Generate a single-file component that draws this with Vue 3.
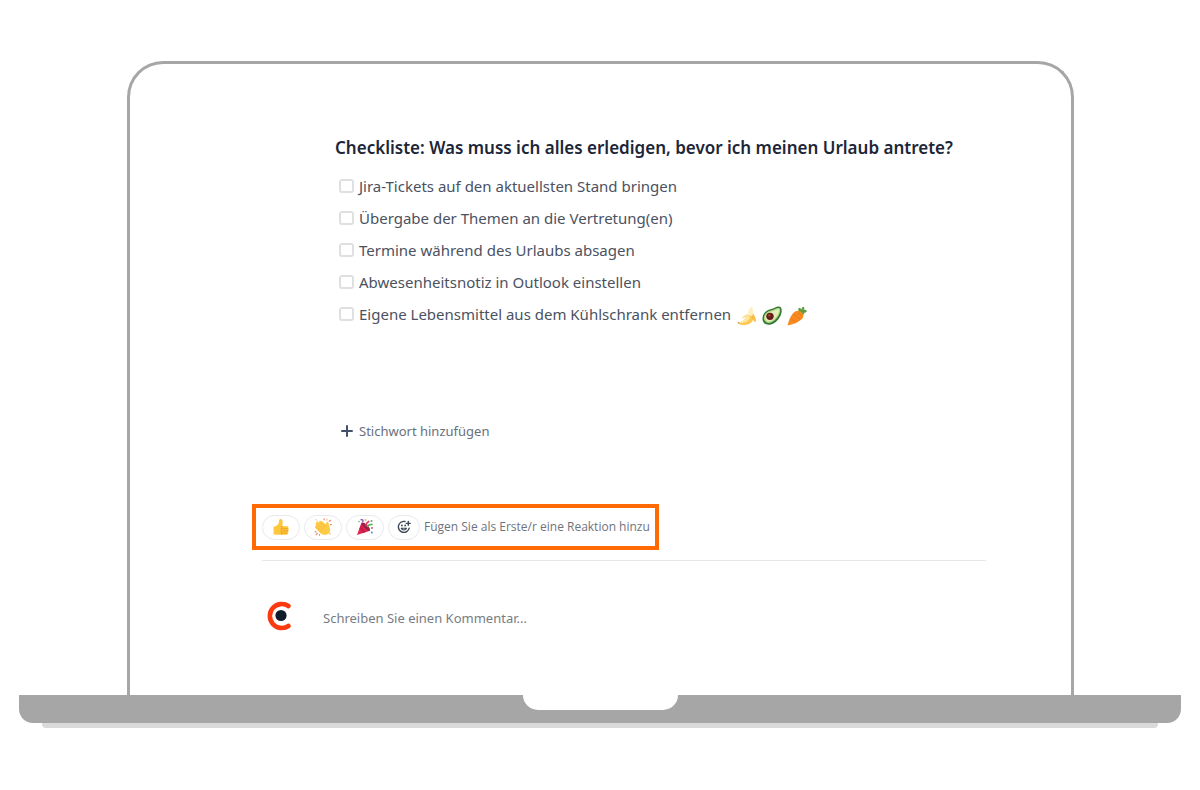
<script setup>
import { ref } from 'vue'

const tasks = ref([
  { id: 'jira', label: 'Jira-Tickets auf den aktuellsten Stand bringen', done: false },
  { id: 'handover', label: 'Übergabe der Themen an die Vertretung(en)', done: false },
  { id: 'meetings', label: 'Termine während des Urlaubs absagen', done: false },
  { id: 'outlook', label: 'Abwesenheitsnotiz in Outlook einstellen', done: false },
  { id: 'food', label: 'Eigene Lebensmittel aus dem Kühlschrank entfernen', done: false, food: true }
])
const comment = ref('')
</script>

<template>
  <div class="laptop">
    <main class="screen">
      <section class="page">
        <div class="article">
          <h1>Checkliste: Was muss ich alles erledigen, bevor ich meinen Urlaub antrete?</h1>
          <ul class="tasks">
            <li v-for="task in tasks" :key="task.id">
              <input :id="task.id" v-model="task.done" type="checkbox" />
              <label :for="task.id">{{ task.label }}</label>
              <span v-if="task.food" class="food">
                <svg viewBox="0 0 20 20" role="img" aria-label="Banane">
                  <path d="M1 16.500C6 16 9 13 10.500 8l6-.500c1.500 5-1.500 11-8 11.500C4.500 19.300 1.500 18.500 1 16.500z" fill="#fdc954" />
                  <path d="M10.500 8.500C9 13 6 15.500 2 16.800c4 .8 9-.8 11-5.300z" fill="#ffe7a0" />
                  <path d="M11 9.500c-.2-3 .3-6 2.300-8 1.300-1 2.400-.1 2.500 1.200.3 3 .7 5 .2 7z" fill="#fff0c4" />
                  <path d="M10 8.500c-2.500.5-4 1.800-5.500 3.800 3-.7 5.500-.6 7.500-1.800z" fill="#fee09a" />
                  <path d="M16 8c2.500 2.500 3.500 5.500 2.500 8.500-1.800-1.800-3.500-3-4-5.500z" fill="#f8bd45" />
                  <path d="M1 15.800l1.500.6-.4 1.500-1.300-.7z" fill="#c9a060" />
                </svg>
                <svg viewBox="0 0 20 20" role="img" aria-label="Avocado">
                  <path d="M19 1.500c1.500 3 .6 7-1.800 10.500C14 17 8.500 20 4 18.300-.5 16.500-.3 10.500 2.500 6.800 5 3.500 8.500 3.600 12 2c2.400-1.200 5.500-2.300 7-.5z" fill="#347a35" />
                  <path d="M17.800 2.500c1 2.500-.2 6-2.300 8.800C12.500 15.500 8 18 4.700 16.400 1 14.700 1.500 10.300 3.600 7.600 6 4.500 9 5 12.500 3.200c1.800-.8 4-1.900 5.300-.7z" fill="#b9d989" />
                  <path d="M17 3.500c.5 2-.8 4.900-2.800 7.200C11.500 14 8 16.500 5.200 15.200 2.500 13.700 2.800 10.500 4.500 8.300 6.800 5.600 9.500 6 12.800 4.400c1.500-.7 3.200-1.400 4.200-.9z" fill="#e3edba" />
                  <ellipse cx="8" cy="10.300" rx="3.700" ry="3.600" fill="#651c19" />
                  <ellipse cx="7.300" cy="9.400" rx="1.500" ry="1.300" fill="#93402c" />
                </svg>
                <svg viewBox="0 0 20 20" role="img" aria-label="Karotte">
                  <path d="M12.500 7C11 4.500 11 3 12 1.800c1.500.1 2 .9 2.400 2C14.600 2 15.600.8 17 .8c.6 1.200.3 2.300-.4 3.300 1.300-.5 2.600-.2 3.200.8-.5 1.500-1.800 2-3.200 1.900.6.7 1 1.200.5 2z" fill="#5d9b40" />
                  <path d="M8 5.500c2.600-1.500 5.500-.8 7.200 1.200 1.700 2.200 1.400 4.600-.2 6.300C11.500 16.500 6 18.500.6 19.500 1.500 14.500 4 8.500 8 5.500z" fill="#f78a20" />
                  <path d="M7 8.500l3 2M12 7.500l2 1.600M4.300 13l2.500 1.600M8.500 16l-1.700-1.400M12.800 12.800l-1.500-1" fill="none" stroke="#e0741c" stroke-width=".8" stroke-linecap="round" />
                </svg>
              </span>
            </li>
          </ul>
          <button type="button" class="add-tag">
            <svg viewBox="0 0 12 12" aria-hidden="true">
              <path d="M6 1v10M1 6h10" fill="none" stroke="#42506b" stroke-width="2" stroke-linecap="round" />
            </svg>
            <span>Stichwort hinzufügen</span>
          </button>
        </div>

        <div class="reactions">
          <button type="button" class="pill" aria-label="Daumen hoch">
            <svg viewBox="0 0 18 18" aria-hidden="true">
              <path d="M1.500 8.500h5v8h-5z" fill="#ffca3f" />
              <path d="M3 8.500C6 7.500 7 5.500 7 3c0-1.200.6-2 1.600-2 1.500 0 2.200 1.400 2.100 3.200L10.400 8l5 .3c1 0 1.400 1.300.7 2 1 .6.900 1.900 0 2.400.7.800.4 1.800-.5 2.200.4 1-.2 1.900-1.300 1.900H8.500c-2 0-3-.5-5-.5z" fill="#ffc63b" />
              <path d="M10.500 10.700h5.300M10.500 12.900h5.200M10.500 15h4.800M9.800 8.500c-1 1.600-.8 6.200 0 7.800" fill="none" stroke="#e59a24" stroke-width=".8" stroke-linecap="round" />
            </svg>
          </button>
          <button type="button" class="pill" aria-label="Applaus">
            <svg viewBox="0 0 18 18" aria-hidden="true">
              <path d="M1.800 7.500C1.400 5.500 2 3.300 3.600 3.600L5 4.500C5.200 2.800 6.500 2.300 7.800 3.300L12 6.600l.3-2c.3-1.200 1.700-1.200 2.100.1l1.500 5.200c.9 3-.1 5.400-2.500 6.400-2.700 1.200-5.300.3-7.400-1.600l-4.400-4.400c-.9-1-.5-2.300.2-2.800z" fill="#ffcb45" />
              <path d="M6 4.800l5 4.200M3.800 6.800l5.500 4.700M2.800 9.300l5 4" fill="none" stroke="#f2b23a" stroke-width=".7" stroke-linecap="round" />
              <path d="M10 1.800l.2-.9M15.300 3.200l1.300-.9M16.300 6.500l1 .2M1.200 13.500l.8.500M2.300 16.500l.9-.8M5.500 17.200l.1-.7" fill="none" stroke="#f08068" stroke-width="1.200" stroke-linecap="round" />
              <path d="M12.600 2.200l.6-1M2.500 2.200l-.7-.7M15.500 15.700l1 .4" fill="none" stroke="#f5b070" stroke-width="1" stroke-linecap="round" />
            </svg>
          </button>
          <button type="button" class="pill" aria-label="Feiern">
            <svg viewBox="0 0 18 18" aria-hidden="true">
              <path d="M5.500 4.500C9 4.500 13.300 8.500 14 12.800L1 17z" fill="#e32650" />
              <path d="M4.600 7.500l5.200 6.600-3 1L3.400 10.700z" fill="#c91c4a" />
              <ellipse cx="9.800" cy="8.600" rx="2" ry="5.400" transform="rotate(-45 9.800 8.600)" fill="#9c1f46" />
              <path d="M10 7.500c.2-2 1-3.200 2.700-4" fill="none" stroke="#df3d69" stroke-width="1.700" stroke-linecap="round" />
              <path d="M11.500 8.500c1.200-1.800 2.600-2.400 4.500-2" fill="none" stroke="#54ad56" stroke-width="1.500" stroke-linecap="round" />
              <path d="M5 1.800c1.700-.6 2.300.5 1.900 1.900" fill="none" stroke="#7853c5" stroke-width="1.300" stroke-linecap="round" />
              <circle cx="9.500" cy="2" r=".9" fill="#f1b43d" />
              <circle cx="15.500" cy="3" r="1" fill="#5bb762" />
              <circle cx="16" cy="10" r="1" fill="#e15467" />
              <circle cx="15.800" cy="14.500" r="1" fill="#5489d8" />
              <circle cx="3" cy="3.500" r=".8" fill="#68b85b" />
            </svg>
          </button>
          <button type="button" class="pill pill-add" aria-label="Reaktion hinzufügen">
            <svg viewBox="0 0 14 14" aria-hidden="true">
              <path d="M8 1.500A5.500 5.500 0 1 0 12.200 8.200" fill="none" stroke="#3b4654" stroke-width="1.400" stroke-linecap="round" />
              <path d="M11.300 1.500v3.800M9.400 3.400h3.800" fill="none" stroke="#3b4654" stroke-width="1.400" stroke-linecap="round" />
              <path d="M4.200 8.200c.9 2.300 4.500 2.300 5.300 0z" fill="#fff" stroke="#3b4654" stroke-width="1.100" stroke-linejoin="round" />
              <circle cx="4.900" cy="5.500" r=".9" fill="#3b4654" />
              <circle cx="8.200" cy="5.500" r=".9" fill="#3b4654" />
            </svg>
          </button>
          <span class="hint">Fügen Sie als Erste/r eine Reaktion hinzu</span>
        </div>

        <hr />

        <form class="comment" @submit.prevent>
          <svg class="avatar" viewBox="0 0 28 30" aria-hidden="true">
            <path d="M23.500 5A12 12 0 1 0 23.500 25" fill="none" stroke="#fc3a10" stroke-width="4.600" stroke-linecap="round" />
            <circle cx="16" cy="14.500" r="5.600" fill="#101b2c" />
          </svg>
          <input v-model="comment" type="text" aria-label="Kommentar" placeholder="Schreiben Sie einen Kommentar..." />
        </form>
      </section>
    </main>
    <div class="base"><div class="notch"></div></div>
    <div class="foot"></div>
  </div>
</template>

<style>
body {
  margin: 0;
  background: #fff;
}
</style>

<style scoped>
.laptop {
  padding: 61px 19px 0;
  font-family: "Noto Sans", "Open Sans", sans-serif;
  color: #4a5261;
}
.screen {
  margin: 0 107px 0 108px;
  padding: 70px 85px 64px 122px;
  border: 3px solid #a6a6a6;
  border-bottom: 0;
  border-radius: 36px 36px 0 0;
}
.article {
  padding-left: 83px;
}
h1 {
  margin: 0 0 8px;
  font-size: 17px;
  line-height: 28px;
  font-weight: 600;
  color: #1c2638;
}
.tasks {
  margin: 0 0 91px;
  padding: 0 0 0 4px;
  list-style: none;
}
.tasks li {
  display: flex;
  align-items: center;
  height: 32px;
}
.tasks input {
  appearance: none;
  flex: none;
  width: 15px;
  height: 14px;
  margin: 0 5px 0 0;
  border: 2px solid #e0e0e2;
  border-radius: 3px;
  background: #fff;
}
.tasks input:checked {
  background: #42506b;
}
.tasks label {
  font-size: 15px;
  line-height: 32px;
}
.food {
  display: flex;
  gap: 5px;
  padding: 4px 0 0 6px;
}
.food svg {
  width: 20px;
  height: 20px;
}
button {
  border: 0;
  background: none;
  font-family: inherit;
  cursor: pointer;
}
.add-tag {
  display: flex;
  align-items: center;
  gap: 6px;
  margin: 0 0 63px 6px;
  padding: 0;
  font-size: 13px;
  line-height: 20px;
  color: #6a707a;
}
.add-tag svg {
  width: 12px;
  height: 12px;
}
.reactions {
  display: flex;
  align-items: center;
  gap: 4px;
  width: fit-content;
  height: 38px;
  margin-bottom: 10px;
  padding: 0 5px 0 6px;
  border: 4px solid #ff6a05;
}
.pill {
  display: flex;
  align-items: center;
  justify-content: center;
  width: 38px;
  height: 25px;
  padding: 0;
  border: 1px solid #e8e9eb;
  border-radius: 13px;
}
.pill svg {
  width: 18px;
  height: 18px;
}
.pill-add {
  width: 32px;
}
.pill-add svg {
  width: 14px;
  height: 14px;
}
.hint {
  font-family: "Open Sans", "Noto Sans", sans-serif;
  font-size: 12px;
  line-height: 18px;
  color: #6f747c;
  white-space: nowrap;
}
hr {
  height: 1px;
  margin: 0 0 40px 10px;
  border: 0;
  background: #e6e6e8;
}
.comment {
  display: flex;
  align-items: center;
  gap: 30px;
  padding-left: 13px;
}
.avatar {
  flex: none;
  width: 28px;
  height: 30px;
}
.comment input {
  flex: 1;
  min-width: 0;
  padding: 4px 0 0;
  border: 0;
  outline: 0;
  background: none;
  font-family: inherit;
  font-size: 13px;
  line-height: 20px;
  color: #4a5261;
}
.comment input::placeholder {
  color: #777c84;
  opacity: 1;
}
.base {
  height: 28px;
  border-radius: 0 0 14px 14px;
  background: #a6a6a6;
}
.notch {
  width: 155px;
  height: 15px;
  margin: 0 auto;
  border-radius: 0 0 15px 15px;
  background: #fff;
}
.foot {
  height: 5px;
  margin: 0 23px;
  border-radius: 0 0 4px 4px;
  background: #dadada;
}
</style>
